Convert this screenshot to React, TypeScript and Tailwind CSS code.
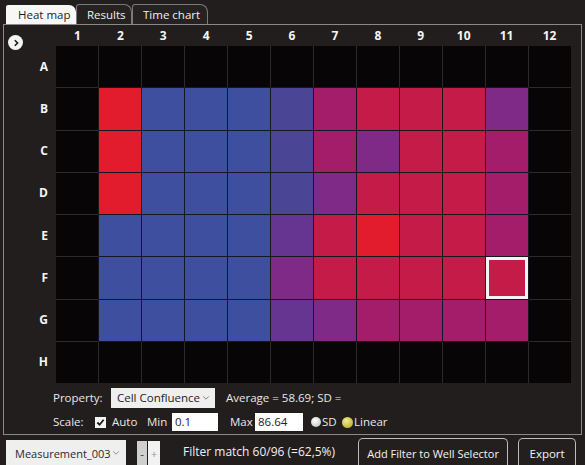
import React from 'react';

const COLORS: Record<string, string> = {
  k: 'bg-[#070506]',
  R: 'bg-[#e21c2c]',
  b: 'bg-[#3e4f9f]',
  v: 'bg-[#4a4695]',
  p: 'bg-[#7e2a86]',
  m: 'bg-[#a41d6a]',
  c: 'bg-[#c51b48]',
  V: 'bg-[#663491]',
  X: 'bg-[#c51b48]',
};

const PLATE = [
  'kkkkkkkkkkkk',
  'kRbbbvmcccpk',
  'kRbbbvmpccmk',
  'kRbbbvpcccmk',
  'kbbbbVcRccmk',
  'kbbbbpccccXk',
  'kbbbbVpmmmmk',
  'kkkkkkkkkkkk',
];

const ROWS = ['A', 'B', 'C', 'D', 'E', 'F', 'G', 'H'];
const COLS = Array.from({ length: 12 }, (_, i) => i + 1);

const Chevron = ({ className }: { className?: string }) => (
  <svg viewBox="0 0 10 6" className={className} fill="none" stroke="currentColor" strokeWidth="1">
    <polyline points="1.5,1 5,4.5 8.5,1" />
  </svg>
);

const Cell = ({ code }: { code: string }) => {
  if (code === 'k') return <div className={COLORS.k} />;
  return (
    <div
      className={`${COLORS[code]} shadow-[0_0_0_1px_#1a1620] ${
        code === 'X' ? 'border-[3px] border-[#f4f4f4]' : ''
      }`}
    />
  );
};

export default function App() {
  return (
    <div className="w-[585px] h-[465px] overflow-hidden bg-[#221e1d] text-[#e8e8e8] font-['Open_Sans',sans-serif] text-[11.5px] leading-none">
      {/* tabs */}
      <div className="flex items-end h-[24px] pl-[6px]">
        <div className="w-[70px] h-[19px] bg-[#f7f7f7] text-[#1e1e1e] rounded-tl-[2px] rounded-tr-[7px] flex items-center pl-[12px]">
          Heat map
        </div>
        <div className="w-[56px] h-[20px] bg-[#262221] border border-b-0 border-[#7a7a7a] rounded-tl-[3px] rounded-tr-[8px] flex items-center pl-[10px] text-[#f0f0f0]">
          Results
        </div>
        <div className="w-[76px] h-[20px] bg-[#262221] border border-b-0 border-[#7a7a7a] rounded-tl-[3px] rounded-tr-[8px] flex items-center pl-[10px] text-[#f0f0f0]">
          Time chart
        </div>
      </div>

      {/* panel */}
      <div className="mx-[3px] h-[411px] border border-[#8a8a8a] flex flex-col">
        <div className="flex">
          <div className="w-[52px] flex flex-col">
            <div className="h-[21px] flex items-end pl-[4px]">
              <div className="w-[15px] h-[15px] -mb-[4px] rounded-full bg-[#f4f4f4] flex items-center justify-center text-[#1b1b1b]">
                <svg viewBox="0 0 10 10" className="w-[8px] h-[8px]" fill="none" stroke="currentColor" strokeWidth="2">
                  <polyline points="3.5,1.5 7,5 3.5,8.5" />
                </svg>
              </div>
            </div>
            <div className="h-[337px] flex flex-col">
              {ROWS.map((r) => (
                <div key={r} className="flex-1 flex items-center justify-end pr-[8px] font-bold text-[12px] text-[#f4f4f4]">
                  {r}
                </div>
              ))}
            </div>
          </div>
          <div className="w-[515px] flex flex-col">
            <div className="h-[21px] grid grid-cols-12 items-center">
              {COLS.map((c) => (
                <div key={c} className="text-center font-bold text-[12px] text-[#f4f4f4]">
                  {c}
                </div>
              ))}
            </div>
            <div className="h-[337px] grid grid-cols-12 grid-rows-8 gap-px bg-[#2c2a2b]">
              {PLATE.map((row, ri) =>
                row.split('').map((code, ci) => <Cell key={`${ri}-${ci}`} code={code} />)
              )}
            </div>
          </div>
        </div>

        {/* property row */}
        <div className="flex items-center h-[20px] mt-[5px] pl-[49px]">
          <span className="w-[58px]">Property:</span>
          <div className="w-[104px] h-[20px] bg-[#efefef] text-[#222] flex items-center justify-between pl-[6px] pr-[5px]">
            <span>Cell Confluence</span>
            <Chevron className="w-[8px] h-[6px] text-[#666]" />
          </div>
          <span className="ml-[11px]">Average = 58.69; SD =</span>
        </div>

        {/* scale row */}
        <div className="flex items-center h-[18px] mt-[5px] pl-[49px]">
          <span className="w-[42px]">Scale:</span>
          <div className="w-[11px] h-[11px] bg-[#f4f4f4] flex items-center justify-center text-[#1a1a1a]">
            <svg viewBox="0 0 10 10" className="w-[9px] h-[9px]" fill="none" stroke="currentColor" strokeWidth="2">
              <polyline points="1.5,5 4,7.5 8.5,2" />
            </svg>
          </div>
          <span className="ml-[6px] w-[35px]">Auto</span>
          <span className="w-[25px]">Min</span>
          <div className="w-[46px] h-[18px] bg-white text-[#222] flex items-center pl-[3px]">0.1</div>
          <span className="ml-[12px] w-[25px]">Max</span>
          <div className="w-[48px] h-[18px] bg-white text-[#222] flex items-center pl-[3px]">86.64</div>
          <div className="ml-[8px] w-[10px] h-[10px] rounded-full bg-[radial-gradient(circle_at_40%_35%,#ffffff,#b8b8b8)]" />
          <span className="ml-[1px] w-[20px]">SD</span>
          <div className="w-[11px] h-[11px] rounded-full bg-[radial-gradient(circle_at_40%_35%,#f4f08a,#a8a020)]" />
          <span className="ml-[1px]">Linear</span>
        </div>
      </div>

      {/* bottom bar */}
      <div className="flex items-start pt-[3px] h-[30px]">
        <div className="ml-[6px] mt-[2px] w-[120px] h-[26px] bg-[#efefef] text-[#2a2a2a] flex items-center justify-between pl-[9px] pr-[6px] text-[11px]">
          <span>Measurement_003</span>
          <Chevron className="w-[8px] h-[6px] text-[#777]" />
        </div>
        <div className="ml-[11px] mt-[3px] w-[10px] h-[25px] bg-[#cfcfcf] text-[#333] flex items-center justify-center">-</div>
        <div className="ml-[1px] mt-[3px] w-[12px] h-[25px] bg-[#f2f2f2] text-[#999] flex items-center justify-center">+</div>
        <div className="ml-[23px] h-[28px] flex items-center text-[12px] text-[#f0f0f0]">Filter match 60/96 (=62,5%)</div>
        <div className="ml-[23px] w-[150px] h-[30px] border border-b-0 border-[#bdbdbd] rounded-t-[5px] bg-[#231f1e] flex items-center justify-center text-[11px] text-[#f4f4f4]">
          Add Filter to Well Selector
        </div>
        <div className="ml-[10px] w-[58px] h-[30px] border border-b-0 border-[#bdbdbd] rounded-t-[5px] bg-[#231f1e] flex items-center justify-center text-[11.5px] text-[#f4f4f4]">
          Export
        </div>
      </div>
    </div>
  );
}
